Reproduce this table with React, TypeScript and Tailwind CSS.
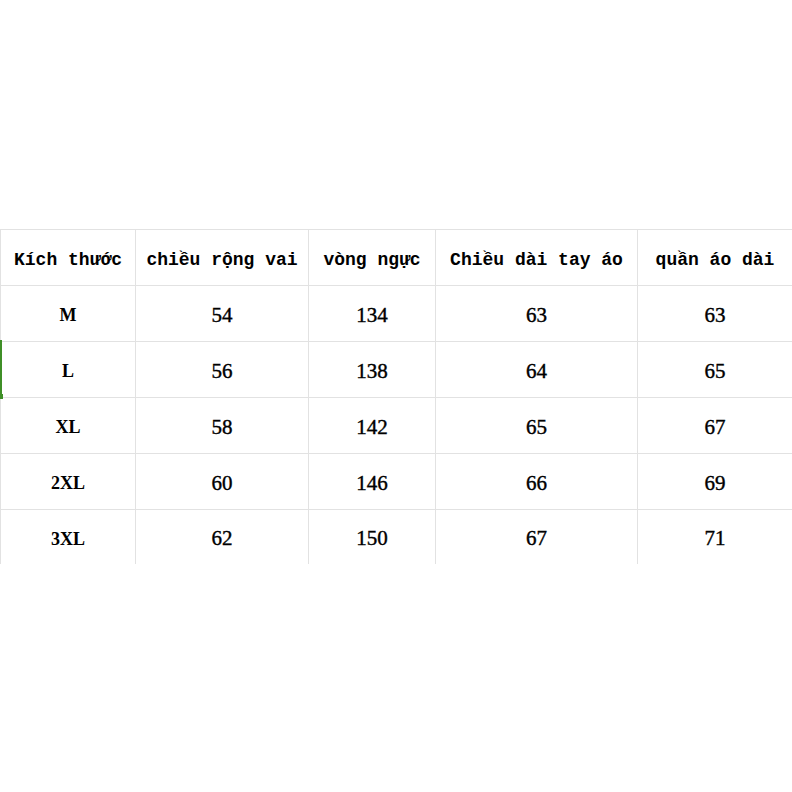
const headers = ["Kích thước", "chiều rộng vai", "vòng ngực", "Chiều dài tay áo", "quần áo dài"];

const rows = [
  ["M", "54", "134", "63", "63"],
  ["L", "56", "138", "64", "65"],
  ["XL", "58", "142", "65", "67"],
  ["2XL", "60", "146", "66", "69"],
  ["3XL", "62", "150", "67", "71"],
];

const cols = "grid grid-cols-[135px_173px_127px_202px_155px]";

export default function App() {
  return (
    <div className="min-h-screen w-full bg-white pt-[229px] text-black">
      <div className="relative w-[792px]">
        <div className={cols}>
          {headers.map((h) => (
            <div
              key={h}
              className="flex h-[56px] items-center justify-center border-l border-t border-[#e2e2e2] pt-[5px] font-['Liberation_Mono',monospace] text-[18px] font-bold whitespace-pre"
            >
              {h}
            </div>
          ))}
        </div>
        {rows.map((r, i) => (
          <div key={r[0]} className={cols}>
            {r.map((c, j) => (
              <div
                key={j}
                className={`flex items-center justify-center border-l border-t border-[#e2e2e2] pt-[4px] font-['Liberation_Serif',serif] ${
                  j === 0 ? "text-[18px] font-bold" : "text-[21px] font-normal [-webkit-text-stroke:0.4px_black]"
                } ${i === rows.length - 1 ? "h-[55px]" : "h-[56px]"}`}
              >
                {c}
              </div>
            ))}
          </div>
        ))}
        {/* selection marker on row L */}
        <div className="absolute left-0 top-[111px] h-[54px] w-[2px] bg-[#3f8f27]" />
        <div className="absolute left-0 top-[165px] h-[5px] w-[3px] bg-[#3f8f27]" />
      </div>
    </div>
  );
}
